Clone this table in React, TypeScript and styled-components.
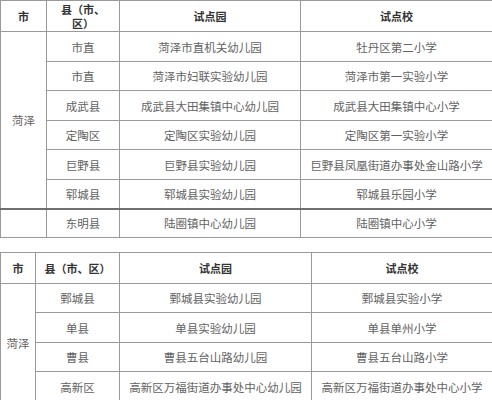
import styled, { createGlobalStyle } from 'styled-components'

const GlobalStyle = createGlobalStyle`
  html, body {
    margin: 0;
    padding: 0;
    background: #fff;
  }
`

const Page = styled.div`
  width: 492px;
  height: 400px;
  overflow: hidden;
  display: flex;
  flex-direction: column;
  gap: 14px;
  font-family: "Noto Sans CJK SC", "Noto Sans", sans-serif;
`

const Table = styled.table`
  width: 492px;
  border-collapse: collapse;
  table-layout: fixed;
  flex-shrink: 0;
`

const Row = styled.tr<{ $height: number; $thick?: boolean }>`
  height: ${(p) => p.$height}px;
  & > td {
    border-top: ${(p) => (p.$thick ? '2px solid #6f6f6f' : '1px solid #9a9a9a')};
  }
`

const HeadCell = styled.td`
  border: 1px solid #9a9a9a;
  padding: 0 6px;
  text-align: center;
  vertical-align: middle;
  font-size: 11px;
  line-height: 14px;
  font-weight: 700;
  color: #333;
`

const Cell = styled.td`
  border: 1px solid #9a9a9a;
  padding: 0 3px;
  text-align: center;
  vertical-align: middle;
  font-size: 11.5px;
  line-height: 14px;
  color: #626262;
  white-space: nowrap;
`

type Entry = { county: string; kindergarten: string; school: string }

const first: Entry[] = [
  { county: '市直', kindergarten: '菏泽市直机关幼儿园', school: '牡丹区第二小学' },
  { county: '市直', kindergarten: '菏泽市妇联实验幼儿园', school: '菏泽市第一实验小学' },
  { county: '成武县', kindergarten: '成武县大田集镇中心幼儿园', school: '成武县大田集镇中心小学' },
  { county: '定陶区', kindergarten: '定陶区实验幼儿园', school: '定陶区第一实验小学' },
  { county: '巨野县', kindergarten: '巨野县实验幼儿园', school: '巨野县凤凰街道办事处金山路小学' },
  { county: '郓城县', kindergarten: '郓城县实验幼儿园', school: '郓城县乐园小学' },
]

const second: Entry[] = [
  { county: '鄄城县', kindergarten: '鄄城县实验幼儿园', school: '鄄城县实验小学' },
  { county: '单县', kindergarten: '单县实验幼儿园', school: '单县单州小学' },
  { county: '曹县', kindergarten: '曹县五台山路幼儿园', school: '曹县五台山路小学' },
  { county: '高新区', kindergarten: '高新区万福街道办事处中心幼儿园', school: '高新区万福街道办事处中心小学' },
]

function Header() {
  return (
    <Row $height={31}>
      <HeadCell>市</HeadCell>
      <HeadCell>县（市、区）</HeadCell>
      <HeadCell>试点园</HeadCell>
      <HeadCell>试点校</HeadCell>
    </Row>
  )
}

function App() {
  return (
    <Page>
      <GlobalStyle />
      <Table>
        <colgroup>
          <col style={{ width: 46 }} />
          <col style={{ width: 73 }} />
          <col style={{ width: 181 }} />
          <col style={{ width: 192 }} />
        </colgroup>
        <tbody>
          <Header />
          {first.map((e, i) => (
            <Row key={i} $height={i % 2 === 0 ? 30 : 29}>
              {i === 0 && <Cell rowSpan={first.length}>菏泽</Cell>}
              <Cell>{e.county}</Cell>
              <Cell>{e.kindergarten}</Cell>
              <Cell>{e.school}</Cell>
            </Row>
          ))}
          <Row $height={29} $thick>
            <Cell />
            <Cell>东明县</Cell>
            <Cell>陆圈镇中心幼儿园</Cell>
            <Cell>陆圈镇中心小学</Cell>
          </Row>
        </tbody>
      </Table>
      <Table>
        <colgroup>
          <col style={{ width: 35 }} />
          <col style={{ width: 84 }} />
          <col style={{ width: 192 }} />
          <col style={{ width: 181 }} />
        </colgroup>
        <tbody>
          <Header />
          {second.map((e, i) => (
            <Row key={i} $height={i % 2 === 0 ? 29 : 30}>
              {i === 0 && <Cell rowSpan={second.length}>菏泽</Cell>}
              <Cell>{e.county}</Cell>
              <Cell>{e.kindergarten}</Cell>
              <Cell>{e.school}</Cell>
            </Row>
          ))}
        </tbody>
      </Table>
    </Page>
  )
}

export default App
